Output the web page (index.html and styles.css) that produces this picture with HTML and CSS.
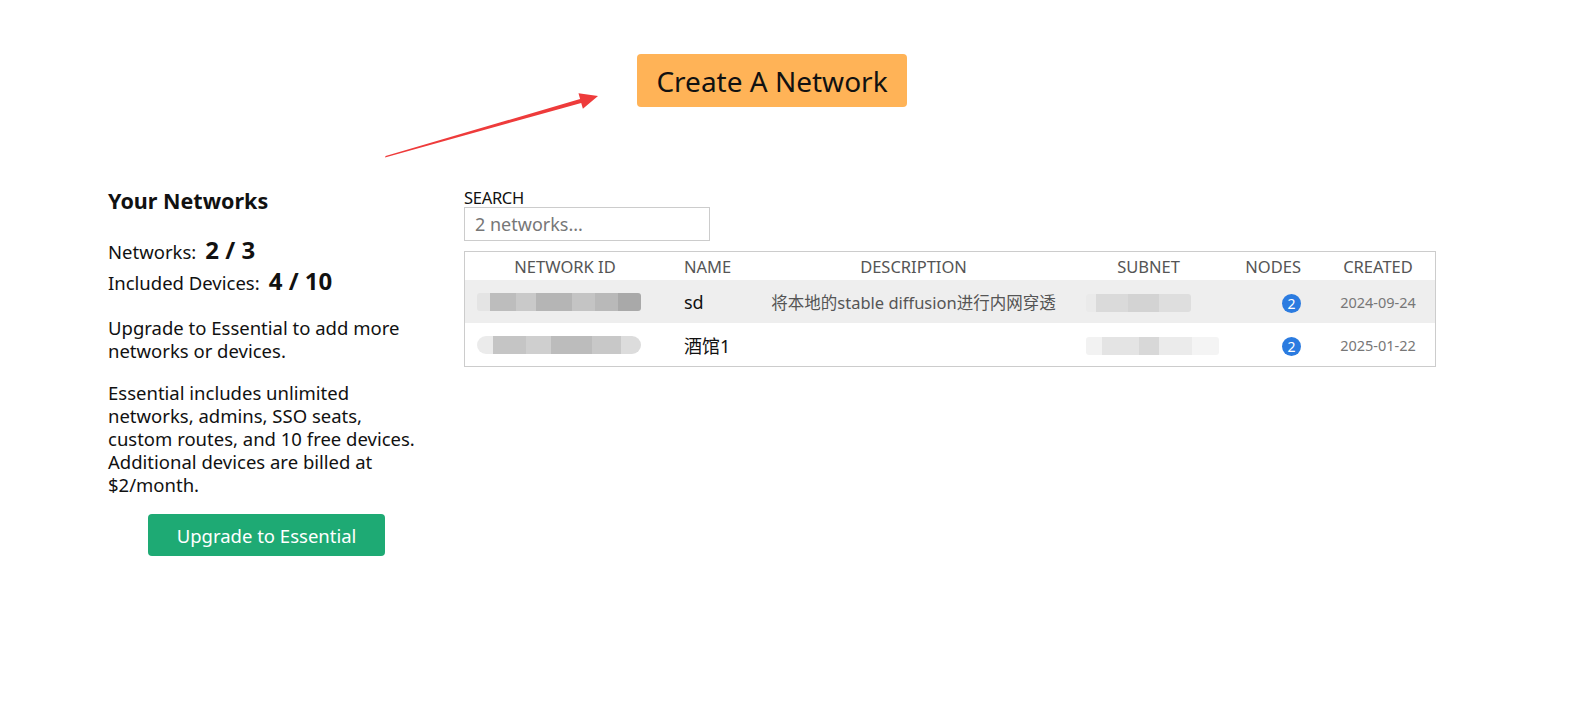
FILE: index.html
```html
<!DOCTYPE html>
<html lang="en">
<head>
<meta charset="utf-8">
<title>Networks</title>
<link rel="stylesheet" href="styles.css">
</head>
<body>
<div class="page">
  <div class="top">
    <button class="create-btn">Create A Network</button>
  </div>
  <div class="main">
    <aside class="side">
      <h2 class="side-title">Your Networks</h2>
      <div class="stat"><span>Networks:</span><b>2 / 3</b></div>
      <div class="stat"><span>Included Devices:</span><b>4 / 10</b></div>
      <p class="para">Upgrade to Essential to add more networks or devices.</p>
      <p class="para">Essential includes unlimited networks, admins, SSO seats, custom routes, and 10 free devices. Additional devices are billed at $2/month.</p>
      <button class="upgrade-btn">Upgrade to Essential</button>
    </aside>
    <section class="content">
      <label class="search-label">SEARCH</label>
      <input class="search" type="text" placeholder="2 networks...">
      <div class="table">
        <div class="row head">
          <div class="c c-id">NETWORK ID</div>
          <div class="c c-name">NAME</div>
          <div class="c c-desc">DESCRIPTION</div>
          <div class="c c-sub">SUBNET</div>
          <div class="c c-nodes">NODES</div>
          <div class="c c-created">CREATED</div>
        </div>
        <div class="row data alt">
          <div class="c c-id"><span class="blur blur-id1"></span></div>
          <div class="c c-name">sd</div>
          <div class="c c-desc">将本地的stable diffusion进行内网穿透</div>
          <div class="c c-sub"><span class="blur blur-sub1"></span></div>
          <div class="c c-nodes"><span class="badge">2</span></div>
          <div class="c c-created">2024-09-24</div>
        </div>
        <div class="row data">
          <div class="c c-id"><span class="blur blur-id2"></span></div>
          <div class="c c-name">酒馆1</div>
          <div class="c c-desc"></div>
          <div class="c c-sub"><span class="blur blur-sub2"></span></div>
          <div class="c c-nodes"><span class="badge">2</span></div>
          <div class="c c-created">2025-01-22</div>
        </div>
      </div>
    </section>
  </div>
</div>
<svg class="arrow" width="1584" height="710" viewBox="0 0 1584 710">
  <polygon points="385,157.5 385.6,156 580.1,99.1 578.5,93.3 598,96 582.9,108.7 581.2,102.9" fill="#ee3b3b"/>
</svg>
</body>
</html>
```
FILE: styles.css
```css
* { box-sizing: border-box; }
html, body { margin: 0; padding: 0; background: #fff; }
body {
  font-family: "Noto Sans", "Noto Sans CJK SC", sans-serif;
  color: #111;
  width: 1584px;
  height: 710px;
  overflow: hidden;
  position: relative;
}
.page {
  margin-left: 108px;
  width: 1328px;
}
.top {
  display: flex;
  justify-content: center;
  padding-top: 54px;
}
.create-btn {
  font-family: inherit;
  background: #ffb357;
  border: none;
  border-radius: 4px;
  width: 270px;
  height: 53px;
  font-size: 28px;
  color: #111;
  padding: 0;
}
.main {
  display: grid;
  grid-template-columns: 356px 972px;
  margin-top: 80px;
}
.side-title {
  margin: 0;
  font-size: 21.5px;
  font-weight: 700;
  line-height: 28px;
}
.stat {
  display: flex;
  align-items: baseline;
  gap: 9px;
  font-size: 18.5px;
  line-height: 29px;
}
.side-title + .stat { margin-top: 20px; }
.stat b { font-size: 24px; font-weight: 700; }
.para {
  margin: 19px 0 0;
  font-size: 18.5px;
  line-height: 23px;
  width: 318px;
}
.para + .para { margin-top: 19px; }
.upgrade-btn {
  font-family: inherit;
  display: block;
  margin: 18px 0 0 40px;
  width: 237px;
  height: 42px;
  background: #1eaa74;
  color: #fff;
  border: none;
  border-radius: 4px;
  font-size: 18.5px;
  padding: 0;
}
.content {
  display: flex;
  flex-direction: column;
  align-items: flex-start;
  padding-top: 2px;
}
.search-label {
  font-size: 16.5px;
  line-height: 18px;
  color: #111;
  letter-spacing: -0.3px;
}
.search {
  width: 246px;
  height: 34px;
  border: 1px solid #ccc;
  padding: 0 10px;
  font-family: inherit;
  font-size: 18px;
  color: #333;
  outline: none;
}
.search::placeholder { color: #777; }
.table {
  margin-top: 10px;
  width: 972px;
  border: 1px solid #ccc;
}
.row {
  display: grid;
  grid-template-columns: 200px 96px 305px 165px 90px 114px;
  align-items: center;
}
.row.head { height: 28px; font-size: 16.5px; color: #555; }
.row.data { height: 43px; }
.row.alt { background: #eeeeee; }
.c { white-space: nowrap; overflow: visible; }
.c-id { text-align: center; }
.c-name { padding-left: 19px; }
.data .c-name { font-size: 18px; color: #111; }
.c-desc { text-align: center; }
.data .c-desc { font-size: 16.5px; color: #555; }
.c-sub { text-align: center; }
.data .c-sub { text-align: left; padding-left: 20px; }
.c-nodes { text-align: right; padding-right: 20px; }
.c-created { text-align: center; }
.data .c-created { font-size: 14.5px; color: #777; }
.badge {
  display: inline-flex;
  align-items: center;
  justify-content: center;
  width: 19px;
  height: 19px;
  border-radius: 50%;
  background: #2b7be0;
  color: #fff;
  font-size: 14px;
  vertical-align: middle;
}
.blur { display: inline-block; height: 18px; vertical-align: middle; border-radius: 3px; }
.c-id .blur { display: block; }
.blur-id1 {
  width: 164px;
  margin-left: 12px;
  background: linear-gradient(90deg, #e4e4e4 0 8%, #bdbdbd 8% 24%, #c9c9c9 24% 36%, #b5b5b5 36% 58%, #c4c4c4 58% 72%, #b9b9b9 72% 86%, #a9a9a9 86% 100%);
}
.blur-id2 {
  width: 164px;
  margin-left: 12px;
  border-radius: 9px;
  background: linear-gradient(90deg, #ebebeb 0 10%, #c5c5c5 10% 30%, #cfcfcf 30% 45%, #bcbcbc 45% 70%, #c8c8c8 70% 88%, #dcdcdc 88% 100%);
}
.blur-sub1 {
  width: 105px;
  background: linear-gradient(90deg, #eaeaea 0 10%, #dadada 10% 40%, #d3d3d3 40% 70%, #dedede 70% 100%);
}
.blur-sub2 {
  width: 133px;
  background: linear-gradient(90deg, #f2f2f2 0 12%, #e4e4e4 12% 40%, #d8d8d8 40% 55%, #ebebeb 55% 80%, #f4f4f4 80% 100%);
}
.arrow {
  position: absolute;
  left: 0;
  top: 0;
  pointer-events: none;
}
```
